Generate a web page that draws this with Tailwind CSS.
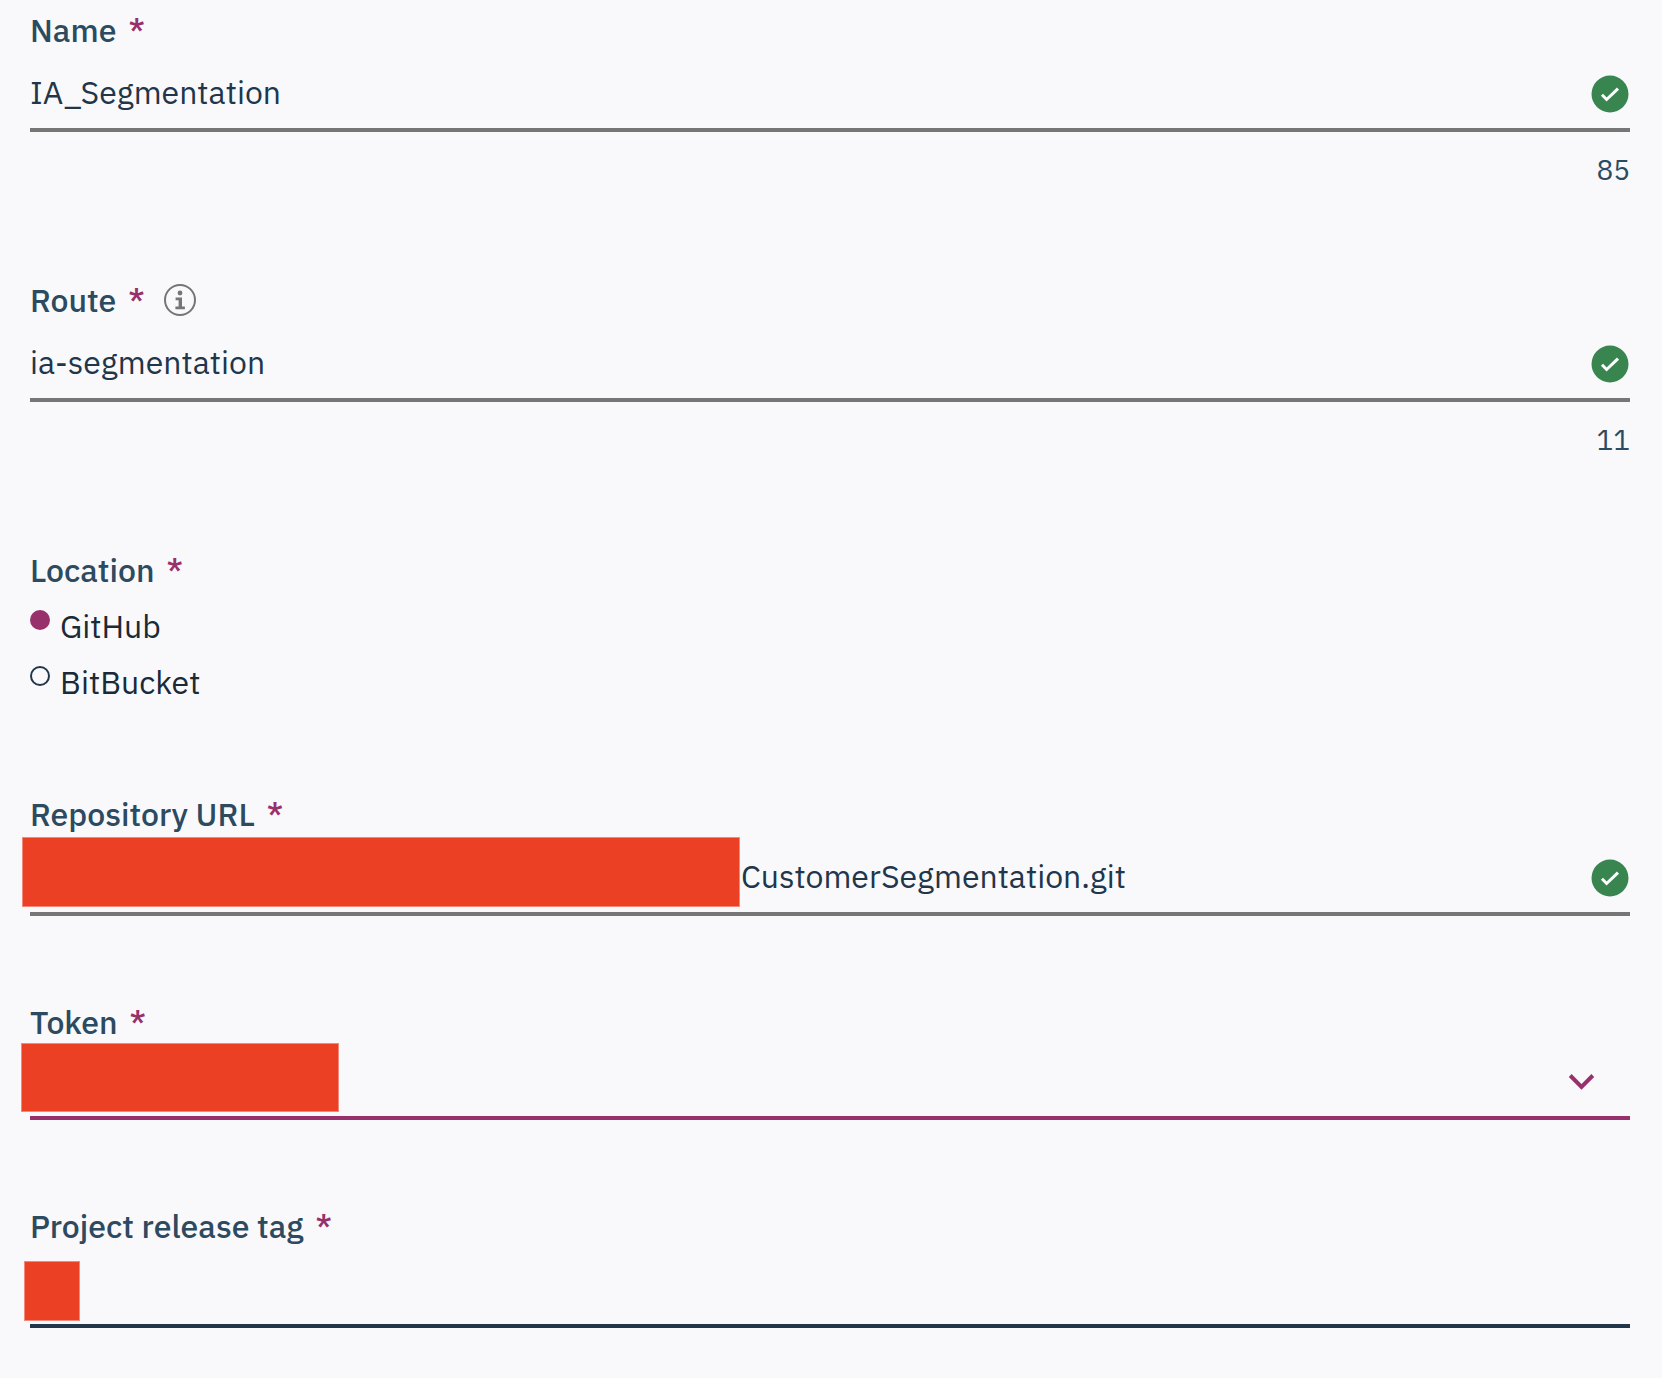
<!DOCTYPE html>
<html lang="en">
<head>
<meta charset="utf-8">
<title>Project settings</title>
<script src="https://cdn.jsdelivr.net/npm/@tailwindcss/browser@4"></script>
</head>
<body class="min-h-screen bg-[#f9f9fc] font-['IBM_Plex_Sans',Roboto,sans-serif] text-[32px] leading-10 text-[#22364a]">
<form class="flex flex-col gap-[86px] pt-2.5 pr-8 pb-12 pl-[30px]">

  <div>
    <label for="name" class="flex gap-3 font-medium text-[#2c4a60]">Name <span class="text-[#98316b]">*</span></label>
    <div class="mt-[5px] flex h-[77px] items-center border-b-4 border-[#767676]">
      <input id="name" type="text" value="IA_Segmentation" class="h-full min-w-0 flex-1 bg-transparent outline-none">
      <svg class="mt-1 size-10 shrink-0" viewBox="0 0 40 40" aria-hidden="true"><circle cx="20" cy="20" r="18.5" fill="#38854f"/><path d="M12 20.8l4.6 4.7L28 14.6" fill="none" stroke="#fff" stroke-width="3"/></svg>
    </div>
    <p class="mt-4 pb-0.5 text-right text-[28px] leading-11 text-[#2c4a60]">85</p>
  </div>

  <div>
    <div class="flex items-center gap-[19px]">
      <label for="route" class="flex gap-3 font-medium text-[#2c4a60]">Route <span class="text-[#98316b]">*</span></label>
      <button type="button" aria-label="About the route"><svg class="size-8" viewBox="0 0 32 32"><circle cx="16" cy="16" r="15" fill="none" stroke="#757575" stroke-width="2"/><circle cx="16" cy="9" r="2.4" fill="#757575"/><path d="M11.6 13.6h6.4v9h2.9v2.6h-9.5v-2.6h3.2v-6.4h-3z" fill="#757575"/></svg></button>
    </div>
    <div class="mt-[5px] flex h-[77px] items-center border-b-4 border-[#767676]">
      <input id="route" type="text" value="ia-segmentation" class="h-full min-w-0 flex-1 bg-transparent outline-none">
      <svg class="mt-1 size-10 shrink-0" viewBox="0 0 40 40" aria-hidden="true"><circle cx="20" cy="20" r="18.5" fill="#38854f"/><path d="M12 20.8l4.6 4.7L28 14.6" fill="none" stroke="#fff" stroke-width="3"/></svg>
    </div>
    <p class="mt-4 pb-0.5 text-right text-[28px] leading-11 text-[#2c4a60]">11</p>
  </div>

  <fieldset class="pb-1.5 text-[#1a2a36]">
    <legend class="flex gap-3 font-medium text-[#2c4a60]">Location <span class="text-[#98316b]">*</span></legend>
    <div class="mt-4 flex flex-col items-start gap-4">
      <label class="flex items-start gap-2.5"><input type="radio" name="location" checked class="mt-1 size-5 appearance-none rounded-full border-2 border-[#22364a] checked:border-[#98316b] checked:bg-[#98316b]">GitHub</label>
      <label class="flex items-start gap-2.5"><input type="radio" name="location" class="mt-1 size-5 appearance-none rounded-full border-2 border-[#22364a] checked:border-[#98316b] checked:bg-[#98316b]">BitBucket</label>
    </div>
  </fieldset>

  <div class="relative">
    <label for="repo" class="flex gap-3 font-medium text-[#2c4a60]">Repository URL <span class="text-[#98316b]">*</span></label>
    <div class="mt-[5px] flex h-[77px] items-center border-b-4 border-[#767676]">
      <input id="repo" type="text" value="CustomerSegmentation.git" class="h-full min-w-0 flex-1 bg-transparent pl-[711px] outline-none">
      <svg class="mt-1 size-10 shrink-0" viewBox="0 0 40 40" aria-hidden="true"><circle cx="20" cy="20" r="18.5" fill="#38854f"/><path d="M12 20.8l4.6 4.7L28 14.6" fill="none" stroke="#fff" stroke-width="3"/></svg>
    </div>
    <div class="absolute top-[43px] -left-2 h-[70px] w-[718px] border border-[#f2897a] bg-[#ec4024]"></div>
  </div>

  <div class="relative">
    <label for="token" class="flex gap-3 font-medium text-[#2c4a60]">Token <span class="text-[#98316b]">*</span></label>
    <div class="relative mt-px">
      <select id="token" class="block h-[77px] w-full appearance-none border-b-4 border-[#98316b] bg-transparent outline-none"><option></option></select>
      <svg class="pointer-events-none absolute top-[25px] right-8 size-8" viewBox="0 0 32 32" aria-hidden="true"><path d="M4.2 7.5L15.5 18.8L26.8 7.5" fill="none" stroke="#98316b" stroke-width="4"/></svg>
    </div>
    <div class="absolute top-[41px] -left-[9px] h-[69px] w-[318px] border border-[#f2897a] bg-[#ec4024]"></div>
  </div>

  <div class="relative">
    <label for="tag" class="flex gap-3 font-medium text-[#2c4a60]">Project release tag <span class="text-[#98316b]">*</span></label>
    <input id="tag" type="text" class="mt-[5px] block h-[77px] w-full border-b-4 border-[#22364a] bg-transparent outline-none">
    <div class="absolute top-[55px] -left-1.5 h-[60px] w-14 border border-[#f2897a] bg-[#ec4024]"></div>
  </div>

</form>
</body>
</html>
